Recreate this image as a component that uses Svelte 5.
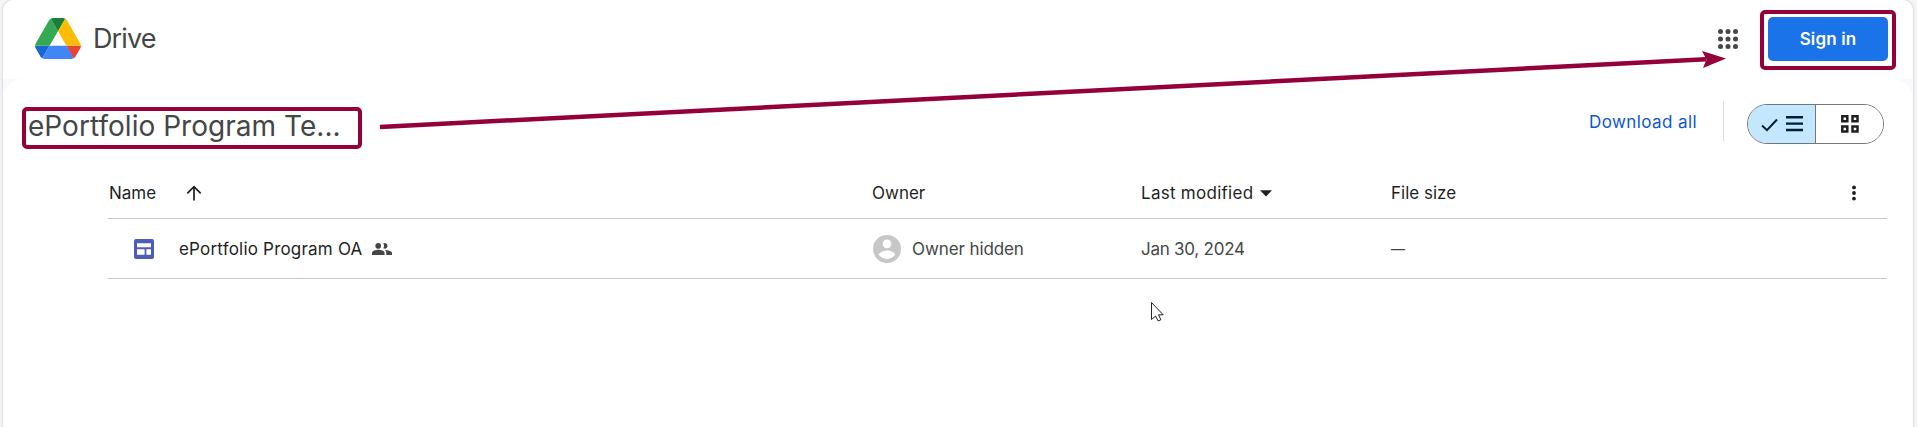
<script lang="ts">
  let view = "list";

  const files = [
    { name: "ePortfolio Program OA", owner: "Owner hidden", modified: "Jan 30, 2024", size: "—" },
  ];

  const dots = [2.5, 10, 17.5];
</script>

<div class="page">
  <div class="card">
    <header>
      <a class="brand" href="#top">
        <svg width="46" height="41" viewBox="0 0 87.3 78">
          <path fill="#1967d2" d="m6.6 66.85 3.85 6.65c.8 1.4 1.95 2.5 3.3 3.3l13.75-23.8h-27.5c0 1.55.4 3.1 1.2 4.5z" />
          <path fill="#34a853" d="m43.65 25-13.75-23.8c-1.35.8-2.5 1.9-3.3 3.3l-25.4 44a9.06 9.06 0 0 0 -1.2 4.5h27.5z" />
          <path fill="#ea4335" d="m73.55 76.8c1.35-.8 2.5-1.9 3.3-3.3l1.6-2.75 7.65-13.25c.8-1.4 1.2-2.95 1.2-4.5h-27.502l5.852 11.5z" />
          <path fill="#188038" d="m43.65 25 13.75-23.8c-1.35-.8-2.9-1.2-4.5-1.2h-18.5c-1.6 0-3.15.45-4.5 1.2z" />
          <path fill="#4285f4" d="m59.8 53h-32.3l-13.75 23.8c1.35.8 2.9 1.2 4.5 1.2h50.8c1.6 0 3.15-.45 4.5-1.2z" />
          <path fill="#fbbc04" d="m73.4 26.5-12.7-22c-.8-1.4-1.95-2.5-3.3-3.3l-13.75 23.8 16.15 28h27.45c0-1.55-.4-3.1-1.2-4.5z" />
        </svg>
        <span>Drive</span>
      </a>
      <div class="account">
        <svg class="apps" width="20" height="20" viewBox="0 0 20 20" fill="#444746">
          {#each dots as y}
            {#each dots as x}
              <circle cx={x} cy={y} r="2.5" />
            {/each}
          {/each}
        </svg>
        <div class="marked-button">
          <button class="sign-in">Sign in</button>
        </div>
      </div>
    </header>

    <main>
      <div class="toolbar">
        <h1>ePortfolio Program Te...</h1>
        <div class="actions">
          <a class="download" href="#download">Download all</a>
          <div class="toggle">
            <button class:active={view === "list"} on:click={() => (view = "list")} aria-label="List">
              <svg width="42" height="18" viewBox="0 0 42 18" fill="none" stroke="#001d35">
                <path stroke-width="2" d="M1 10.5 6 15.2 16 4.5" />
                <path stroke-width="2.4" d="M25 2.2H42.5M25 8.6H42.5M25 15H42.5" />
              </svg>
            </button>
            <button class:active={view === "grid"} on:click={() => (view = "grid")} aria-label="Grid">
              <svg width="18" height="18" viewBox="0 0 18 18" fill="none" stroke="#1f1f1f" stroke-width="2.5">
                <path d="M1.3 1.3h5v5h-5zM11.5 1.3h5v5h-5zM1.3 11.5h5v5h-5zM11.5 11.5h5v5h-5z" />
              </svg>
            </button>
          </div>
        </div>
      </div>

      <div class="table">
        <div class="row head">
          <div class="name">
            <span>Name</span>
            <svg class="sort" width="16" height="16" viewBox="0 0 16 16" fill="none" stroke="#1f1f1f" stroke-width="1.7">
              <path d="M8 15.5V2M1.3 8.3 8 1.6l6.7 6.7" />
            </svg>
          </div>
          <div class="owner">Owner</div>
          <div class="modified">
            <span class="label">Last modified</span>
            <svg class="caret" width="12" height="7" viewBox="0 0 12 7"><path fill="#1f1f1f" d="M0 .3h12L6 6.6z" /></svg>
          </div>
          <div class="size">File size</div>
          <svg class="more" width="4" height="16" viewBox="0 0 4 16" fill="#1f1f1f">
            <circle cx="2" cy="2.4" r="1.9" />
            <circle cx="2" cy="8" r="1.9" />
            <circle cx="2" cy="13.6" r="1.9" />
          </svg>
        </div>

        {#each files as file}
          <div class="row">
            <div class="name file">
              <svg width="20" height="20" viewBox="0 0 20 20">
                <rect width="20" height="20" rx="2" fill="#4b5cba" />
                <path fill="#fff" d="M3 4.2h14v4H3zM3 10.2h7.600v5.600H3zM12.400 10.200H17v5.600h-4.600z" />
              </svg>
              <span class="title">{file.name}</span>
              <svg class="shared" width="20" height="12" viewBox="0 0 20 12" fill="#444746">
                <circle cx="6.2" cy="2.9" r="2.8" />
                <path d="M0 12V9.8C0 7.8 3.6 6.7 6.3 6.7s6.3 1.1 6.3 3.1V12z" />
                <path d="M11.2 5.3a4.2 4.2 0 0 0 0-4.8 2.8 2.8 0 1 1 0 4.8zM14.3 12V9.8c0-1.2-.5-2.2-1.6-2.9 3.2.1 7.3 1 7.3 3V12z" />
              </svg>
            </div>
            <div class="owner muted">
              <svg width="28" height="28" viewBox="0 0 28 28">
                <circle cx="14" cy="14" r="14" fill="#c7c7c7" />
                <circle cx="14" cy="8.9" r="4.3" fill="#fff" />
                <path fill="#fff" d="M5.6 19.6c1.5-2.8 5.3-4.2 8.4-4.2s6.9 1.4 8.4 4.2C20.6 22.4 17.5 24 14 24s-6.6-1.600-8.400-4.400z" />
              </svg>
              <span>{file.owner}</span>
            </div>
            <div class="modified muted"><span class="date">{file.modified}</span></div>
            <div class="size muted"><span class="dash">{file.size}</span></div>
          </div>
        {/each}
      </div>
    </main>
  </div>

  <!-- annotation arrow and mouse pointer sit over the page -->
  <svg class="overlay" width="1917" height="427" viewBox="0 0 1917 427">
    <path d="M380 127 1706 59.3" stroke="#93003a" stroke-width="4.5" />
    <path d="M1726 58.500 1702 51 1706.500 59.500 1703 68z" fill="#93003a" />
    <path d="M1151.5 302.5v17l4-3.5 2.7 5 2.7-1.3-2.4-4.9h4.7z" fill="#fff" stroke="#222" />
  </svg>
</div>

<style>
  :global(body) {
    margin: 0;
    overflow: hidden;
    background: #f5f5f6;
  }

  .page {
    position: relative;
    box-sizing: border-box;
    height: 427px;
    padding: 0 4px 0 3px;
    overflow: hidden;
    font-family: Inter, "Open Sans", sans-serif;
    font-size: 17px;
    color: #1f1f1f;
  }

  .card {
    height: 440px;
    border-radius: 11px 11px 0 0;
    overflow: hidden;
    background: #f8fafd;
    box-shadow: 0 0 3px rgba(0, 0, 0, 0.22);
  }

  header {
    display: flex;
    justify-content: space-between;
    height: 79px;
    background: #fff;
  }

  a {
    text-decoration: none;
  }

  .brand {
    display: flex;
    align-items: center;
    gap: 12px;
    height: 77px;
    padding-left: 32px;
    color: #444746;
    font-size: 27px;
  }

  .brand span {
    letter-spacing: -0.9px;
  }

  .account {
    display: flex;
    align-items: flex-start;
    gap: 22px;
    padding-right: 17px;
  }

  .apps {
    margin-top: 29px;
  }

  .marked-button {
    box-sizing: border-box;
    width: 136px;
    height: 60px;
    margin-top: 10px;
    padding: 3px 4px;
    border: 4px solid #93003a;
    border-radius: 5px;
  }

  .sign-in {
    width: 120px;
    height: 44px;
    padding: 0;
    border: 0;
    border-radius: 5px;
    background: #1a73e8;
    color: #fff;
    font: 600 17px Inter, sans-serif;
    letter-spacing: 0.15px;
  }

  main {
    height: 361px;
    border-radius: 20px 20px 0 0;
    background: #fff;
  }

  .toolbar {
    display: flex;
    justify-content: space-between;
    height: 91px;
    padding: 0 29px 0 19px;
  }

  h1 {
    box-sizing: border-box;
    width: 340px;
    height: 42px;
    margin: 28px 0 0;
    padding-left: 2px;
    border: 4px solid #93003a;
    border-radius: 5px;
    color: #444746;
    font-size: 28px;
    font-weight: 400;
    line-height: 30px;
    letter-spacing: 0.03px;
    white-space: nowrap;
  }

  .actions {
    display: flex;
    align-items: flex-start;
    padding-top: 22px;
  }

  .download {
    height: 40px;
    padding-right: 26px;
    border-right: 1px solid #dcdde0;
    color: #0b57d0;
    line-height: 43px;
    letter-spacing: 0.4px;
  }

  .toggle {
    box-sizing: border-box;
    display: flex;
    width: 137px;
    height: 40px;
    margin: 3px 0 0 23px;
    border: 1px solid #747775;
    border-radius: 20px;
    overflow: hidden;
  }

  .toggle button {
    display: flex;
    flex: 1;
    align-items: center;
    justify-content: center;
    padding: 0;
    border: 0;
    background: #fff;
  }

  .toggle button + button {
    border-left: 1px solid #747775;
  }

  .toggle .active {
    background: #c2e7ff;
  }

  .table {
    margin: 0 26px 0 105px;
  }

  .row {
    display: flex;
    box-sizing: border-box;
    height: 60px;
    border-bottom: 1px solid #c4c7c5;
  }

  .row.head {
    height: 49px;
  }

  .row > div {
    display: flex;
    align-items: center;
    white-space: nowrap;
  }

  .row.head > div {
    height: 46px;
  }

  .name {
    width: 764px;
    padding-left: 1px;
    box-sizing: border-box;
  }

  .sort {
    margin-left: 30px;
  }

  .name.file {
    padding-left: 26px;
  }

  .title {
    margin-left: 25px;
    letter-spacing: 0.2px;
  }

  .label {
    letter-spacing: 0.27px;
  }

  .shared {
    margin-left: 10px;
  }

  .owner {
    width: 269px;
  }

  .owner svg {
    margin: 0 11px 0 1px;
  }

  .owner.muted {
    letter-spacing: -0.1px;
  }

  .modified {
    width: 250px;
  }

  .caret {
    margin-left: 7px;
  }

  .size {
    width: 461px;
  }

  .more {
    margin-top: 15px;
  }

  .muted {
    color: #444746;
  }

  .date {
    letter-spacing: -0.25px;
  }

  .dash {
    font-size: 14px;
  }

  .overlay {
    position: absolute;
    left: 0;
    top: 0;
    pointer-events: none;
  }
</style>
